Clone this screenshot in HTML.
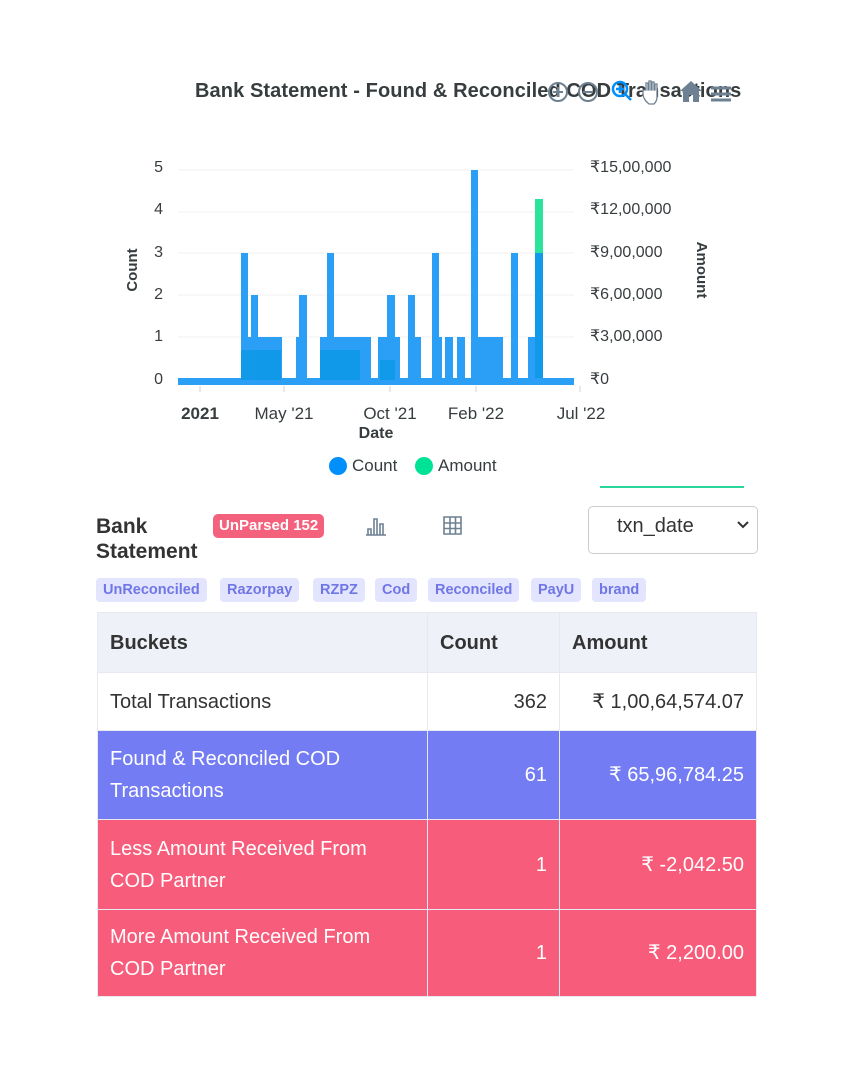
<!DOCTYPE html>
<html><head><meta charset="utf-8"><style>
*{margin:0;padding:0;box-sizing:border-box}
body{width:841px;height:1080px;background:#fff;font-family:"Liberation Sans",sans-serif;color:#373d3f;position:relative;overflow:hidden}
.a{position:absolute;white-space:nowrap}
.tag{position:absolute;top:578px;height:24px;background:#e3e4fd;color:#6f76e6;border-radius:4px;font-size:14.5px;font-weight:bold;line-height:24px;padding:0 7px}
table{position:absolute;left:97px;top:612px;width:660px;border-collapse:collapse;font-size:20px}
td{border:1px solid #e6e9ef;padding:0 12px;line-height:32px}
.r{text-align:right}
</style></head><body>
<div class="a" style="left:195px;top:80px;font-size:20px;font-weight:bold;color:#373d3f;letter-spacing:0.1px">Bank Statement - Found &amp; Reconciled COD Transactions</div>
<svg class="a" style="left:545px;top:78px" width="195" height="28" viewBox="0 0 195 28">
<circle cx="13" cy="14" r="9" fill="none" stroke="#6e8192" stroke-width="2"/><path d="M13 9v10M8 14h10" stroke="#6e8192" stroke-width="2"/>
<circle cx="43" cy="14" r="9" fill="none" stroke="#6e8192" stroke-width="2"/><path d="M38 14h10" stroke="#6e8192" stroke-width="2"/>
<circle cx="75" cy="11" r="7" fill="none" stroke="#008ffb" stroke-width="2.5"/><path d="M80 16l6 6M75 7v8M71 11h8" stroke="#008ffb" stroke-width="2.5"/>
<path d="M104 26c-4-3-6-7-6-10v-4h3v-7h2v7h1v-9h2v9h1v-8h2v8h1v-6h2v13c0 3-1 5-3 7z" fill="#fff" stroke="#6e8192" stroke-width="1.3"/>
<path d="M135 13l11-10 11 10h-3v11h-6v-7h-4v7h-6v-11z" fill="#6e8192"/>
<path d="M166 10h20M166 16h20M166 22h20" stroke="#6e8192" stroke-width="3"/>
</svg>
<svg class="a" style="left:100px;top:150px" width="640" height="300" viewBox="100 150 640 300" font-family="Liberation Sans" font-size="16" fill="#373d3f">
<g stroke="#f1f1f1"><path d="M178 170h396M178 212h396M178 253h396M178 295h396M178 337h396"/></g>
<g fill="#2b9ef5">
<rect x="178" y="378" width="396" height="7"/>
<rect x="241" y="253" width="7" height="132"/><rect x="251" y="295" width="7" height="90"/><rect x="248" y="337" width="34" height="48"/>
<rect x="296" y="337" width="4" height="48"/><rect x="299" y="295" width="8" height="90"/>
<rect x="320" y="337" width="7" height="48"/><rect x="327" y="253" width="7" height="132"/><rect x="334" y="337" width="37" height="48"/>
<rect x="378" y="337" width="9" height="48"/><rect x="387" y="295" width="8" height="90"/><rect x="395" y="337" width="5" height="48"/>
<rect x="408" y="295" width="7" height="90"/><rect x="415" y="337" width="6" height="48"/>
<rect x="432" y="253" width="7" height="132"/><rect x="439" y="337" width="3" height="48"/>
<rect x="445" y="337" width="8" height="48"/><rect x="457" y="337" width="8" height="48"/>
<rect x="471" y="170" width="7" height="215"/><rect x="478" y="337" width="25" height="48"/>
<rect x="511" y="253" width="7" height="132"/><rect x="528" y="337" width="8" height="48"/>
<rect x="535" y="253" width="8" height="132"/></g>
<rect x="535" y="199" width="8" height="54" fill="#2ce39b"/>
<g fill="#0a98e6" opacity=".8"><rect x="241" y="350" width="40" height="30"/><rect x="320" y="350" width="40" height="30"/><rect x="380" y="360" width="15" height="20"/><rect x="535" y="253" width="8" height="125"/></g>
<g stroke="#d0d0d0"><path d="M200 386v6M284 386v6M390 386v6M476 386v6M580 386v6"/></g>
<g text-anchor="end"><text x="163" y="172">5</text><text x="163" y="214">4</text><text x="163" y="257">3</text><text x="163" y="299">2</text><text x="163" y="341">1</text><text x="163" y="384">0</text></g>
<g><text x="590" y="172">₹15,00,000</text><text x="590" y="214">₹12,00,000</text><text x="590" y="257">₹9,00,000</text><text x="590" y="299">₹6,00,000</text><text x="590" y="341">₹3,00,000</text><text x="590" y="384">₹0</text></g>
<g text-anchor="middle" font-size="17"><text x="200" y="419" font-weight="bold">2021</text><text x="284" y="419">May '21</text><text x="390" y="419">Oct '21</text><text x="476" y="419">Feb '22</text><text x="581" y="419">Jul '22</text></g>
<text x="376" y="438" text-anchor="middle" font-weight="bold">Date</text>
<text transform="translate(137,270) rotate(-90)" text-anchor="middle" font-weight="bold" font-size="15">Count</text>
<text transform="translate(697,270) rotate(90)" text-anchor="middle" font-weight="bold" font-size="15">Amount</text>
</svg>
<div class="a" style="left:329px;top:457px;width:18px;height:18px;border-radius:50%;background:#008ffb"></div>
<div class="a" style="left:352px;top:456px;font-size:17px">Count</div>
<div class="a" style="left:415px;top:457px;width:18px;height:18px;border-radius:50%;background:#00e396"></div>
<div class="a" style="left:438px;top:456px;font-size:17px">Amount</div>
<div class="a" style="left:600px;top:486px;width:144px;height:2px;background:#2ad69a"></div>
<div class="a" style="left:96px;top:514px;font-size:21px;font-weight:bold;line-height:25px;color:#333">Bank<br>Statement</div>
<div class="a" style="left:213px;top:514px;height:24px;background:#f4617c;color:#fff;border-radius:5px;font-size:15px;font-weight:bold;line-height:24px;padding:0 6px">UnParsed 152</div>
<svg class="a" style="left:364px;top:515px" width="24" height="22"><path d="M2 20h20M4 20v-6h3v6M10 20v-16h3v16M16 20v-11h3v11" fill="none" stroke="#6e8192" stroke-width="1.6"/></svg>
<svg class="a" style="left:443px;top:516px" width="20" height="20"><path d="M1 1h17v17h-17zM1 7h17M1 12.5h17M7 1v17M12.5 1v17" fill="none" stroke="#6e8192" stroke-width="1.6"/></svg>
<div class="a" style="left:588px;top:506px;width:170px;height:48px;border:1px solid #ccc;border-radius:5px"></div>
<div class="a" style="left:617px;top:515px;font-size:20px;color:#333">txn_date</div>
<svg class="a" style="left:736px;top:520px" width="14" height="10"><path d="M2 2l5 5 5-5" fill="none" stroke="#333" stroke-width="2"/></svg>
<div class="tag" style="left:96px">UnReconciled</div>
<div class="tag" style="left:220px">Razorpay</div>
<div class="tag" style="left:313px">RZPZ</div>
<div class="tag" style="left:375px">Cod</div>
<div class="tag" style="left:428px">Reconciled</div>
<div class="tag" style="left:531px">PayU</div>
<div class="tag" style="left:592px">brand</div>
<table>
<tr style="background:#eef1f8;height:60px;font-weight:bold;color:#333"><td style="width:330px">Buckets</td><td style="width:132px">Count</td><td>Amount</td></tr>
<tr style="height:58px;color:#333"><td>Total Transactions</td><td class="r">362</td><td class="r">₹ 1,00,64,574.07</td></tr>
<tr style="height:89px;background:#737cf3;color:#fff"><td>Found &amp; Reconciled COD Transactions</td><td class="r">61</td><td class="r">₹ 65,96,784.25</td></tr>
<tr style="height:90px;background:#f85c7b;color:#fff"><td>Less Amount Received From COD Partner</td><td class="r">1</td><td class="r">₹ -2,042.50</td></tr>
<tr style="height:87px;background:#f85c7b;color:#fff"><td>More Amount Received From COD Partner</td><td class="r">1</td><td class="r">₹ 2,200.00</td></tr>
</table>
</body></html>
